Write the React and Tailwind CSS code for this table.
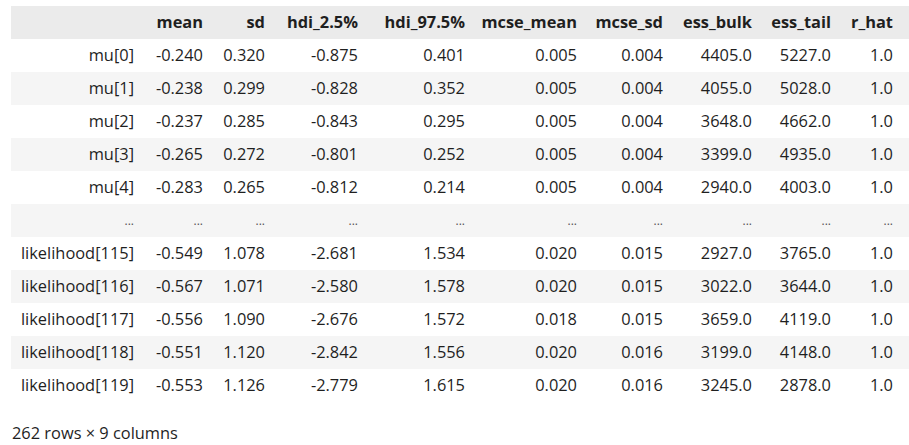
import React from "react";

const columns = ["mean", "sd", "hdi_2.5%", "hdi_97.5%", "mcse_mean", "mcse_sd", "ess_bulk", "ess_tail", "r_hat"];

const rows = [
  ["mu[0]", "-0.240", "0.320", "-0.875", "0.401", "0.005", "0.004", "4405.0", "5227.0", "1.0"],
  ["mu[1]", "-0.238", "0.299", "-0.828", "0.352", "0.005", "0.004", "4055.0", "5028.0", "1.0"],
  ["mu[2]", "-0.237", "0.285", "-0.843", "0.295", "0.005", "0.004", "3648.0", "4662.0", "1.0"],
  ["mu[3]", "-0.265", "0.272", "-0.801", "0.252", "0.005", "0.004", "3399.0", "4935.0", "1.0"],
  ["mu[4]", "-0.283", "0.265", "-0.812", "0.214", "0.005", "0.004", "2940.0", "4003.0", "1.0"],
  ["...", "...", "...", "...", "...", "...", "...", "...", "...", "..."],
  ["likelihood[115]", "-0.549", "1.078", "-2.681", "1.534", "0.020", "0.015", "2927.0", "3765.0", "1.0"],
  ["likelihood[116]", "-0.567", "1.071", "-2.580", "1.578", "0.020", "0.015", "3022.0", "3644.0", "1.0"],
  ["likelihood[117]", "-0.556", "1.090", "-2.676", "1.572", "0.018", "0.015", "3659.0", "4119.0", "1.0"],
  ["likelihood[118]", "-0.551", "1.120", "-2.842", "1.556", "0.020", "0.016", "3199.0", "4148.0", "1.0"],
  ["likelihood[119]", "-0.553", "1.126", "-2.779", "1.615", "0.020", "0.016", "3245.0", "2878.0", "1.0"],
];

const grid = "grid grid-cols-[132px_69px_62px_93px_107px_112px_86px_89px_79px_62px]";

export default function App() {
  return (
    <div className="w-[909px] h-[445px] bg-white pl-[11px] pt-[6px] text-[16.4px] text-[#1f1f1f] font-['Open_Sans',sans-serif]">
      {/* Header */}
      <div className={`${grid} h-[33px] items-center bg-[#ebebeb] font-bold`}>
        <div />
        {columns.map((c) => (
          <div key={c} className="text-right pr-[9px] whitespace-nowrap">
            {c}
          </div>
        ))}
      </div>

      {/* Body */}
      {rows.map((r, i) => (
        <div
          key={i}
          className={`${grid} h-[33px] items-center ${i % 2 === 1 ? "bg-[#f5f5f5]" : "bg-white"}`}
        >
          {r.map((v, j) => (
            <div
              key={j}
              className={`text-right pr-[9px] whitespace-nowrap ${v === "..." ? "text-[12px] text-[#555]" : ""}`}
            >
              {v}
            </div>
          ))}
        </div>
      ))}

      <div className="mt-[19px] pl-[1px]">262 rows × 9 columns</div>
    </div>
  );
}
